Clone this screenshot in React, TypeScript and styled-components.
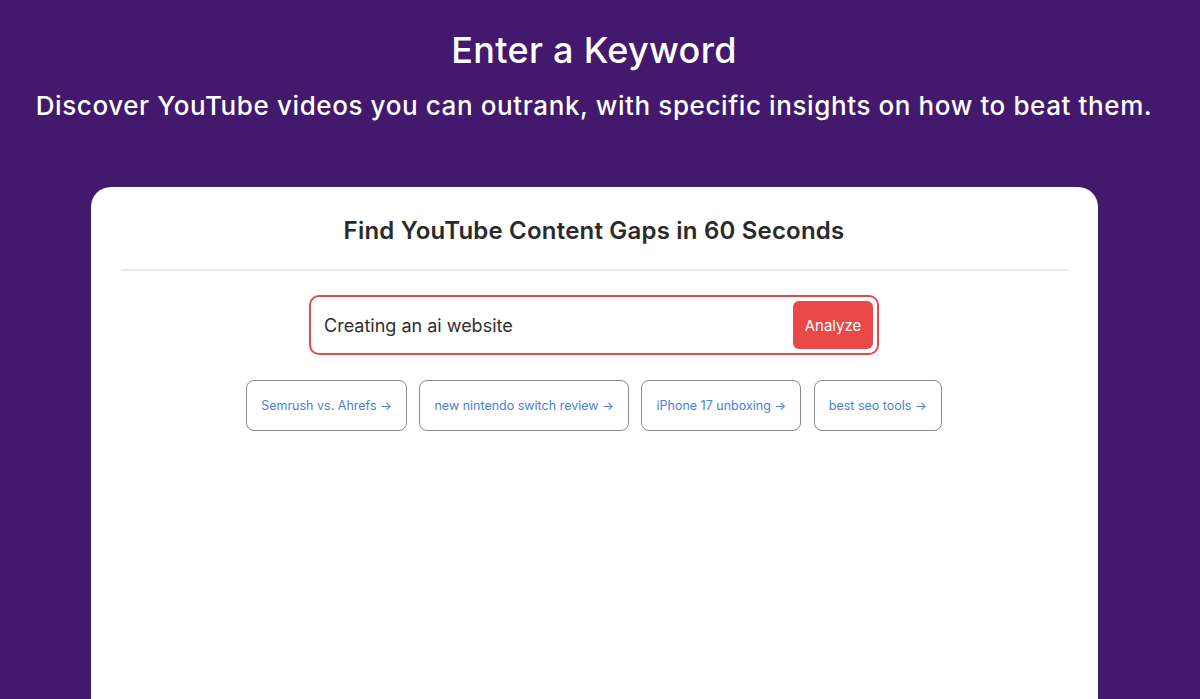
import React from "react";
import styled, { createGlobalStyle } from "styled-components";

const Global = createGlobalStyle`
  html, body { margin: 0; padding: 0; background: #42196c; }
  body { font-family: "Inter", "Noto Sans", sans-serif; overflow: hidden; }
  * { box-sizing: border-box; }
`;

const Page = styled.div`
  min-height: 699px;
  background: #42196c;
  display: flex;
  flex-direction: column;
  align-items: center;
  padding-right: 12px;
`;

const Header = styled.header`
  display: flex;
  flex-direction: column;
  align-items: center;
  padding-top: 28px;
  color: #ffffff;
`;

const Title = styled.h1`
  margin: 0;
  font-size: 36px;
  line-height: 44px;
  font-weight: 500;
  letter-spacing: 0.3px;
`;

const Subtitle = styled.p`
  margin: 17px 0 0;
  font-size: 26px;
  line-height: 34px;
  font-weight: 500;
  letter-spacing: 0.6px;
`;

const Card = styled.main`
  margin-top: 64px;
  width: 1007px;
  height: 560px;
  background: #ffffff;
  border-radius: 20px;
  padding: 28px 30px 0;
  display: flex;
  flex-direction: column;
  align-items: center;
`;

const CardTitle = styled.h2`
  margin: 0;
  font-size: 24px;
  line-height: 32px;
  font-weight: 600;
  letter-spacing: 0.2px;
  color: #2a2a2a;
`;

const Divider = styled.hr`
  align-self: stretch;
  margin: 22px 0 0;
  border: 0;
  border-top: 2px solid #e8e8e8;
`;

const SearchBox = styled.form`
  margin-top: 24px;
  width: 570px;
  height: 60px;
  border: 2px solid #e5484d;
  border-radius: 10px;
  display: flex;
  align-items: center;
  padding: 0 4px 0 13px;
`;

const Input = styled.input`
  flex: 1;
  border: 0;
  padding: 0;
  outline: none;
  font-family: inherit;
  font-size: 18px;
  color: #2e2e2e;
  background: transparent;
`;

const Button = styled.button`
  width: 80px;
  height: 48px;
  border: 0;
  border-radius: 6px;
  background: #ea4747;
  color: #ffffff;
  font-family: inherit;
  font-size: 15px;
`;

const Chips = styled.div`
  margin-top: 25px;
  display: flex;
  gap: 12.5px;
`;

const Chip = styled.button`
  height: 51px;
  padding: 0 14px;
  border: 1px solid #8a8a8a;
  border-radius: 8px;
  background: #ffffff;
  color: #4a7fd8;
  font-family: inherit;
  font-size: 12.5px;
`;

const suggestions = [
  "Semrush vs. Ahrefs",
  "new nintendo switch review",
  "iPhone 17 unboxing",
  "best seo tools",
];

export default function App() {
  return (
    <>
      <Global />
      <Page>
        <Header>
          <Title>Enter a Keyword</Title>
          <Subtitle>
            Discover YouTube videos you can outrank, with specific insights on how to beat them.
          </Subtitle>
        </Header>
        <Card>
          <CardTitle>Find YouTube Content Gaps in 60 Seconds</CardTitle>
          <Divider />
          <SearchBox onSubmit={(e) => e.preventDefault()}>
            <Input defaultValue="Creating an ai website" />
            <Button type="submit">Analyze</Button>
          </SearchBox>
          <Chips>
            {suggestions.map((s) => (
              <Chip key={s} type="button">
                {s} →
              </Chip>
            ))}
          </Chips>
        </Card>
      </Page>
    </>
  );
}
